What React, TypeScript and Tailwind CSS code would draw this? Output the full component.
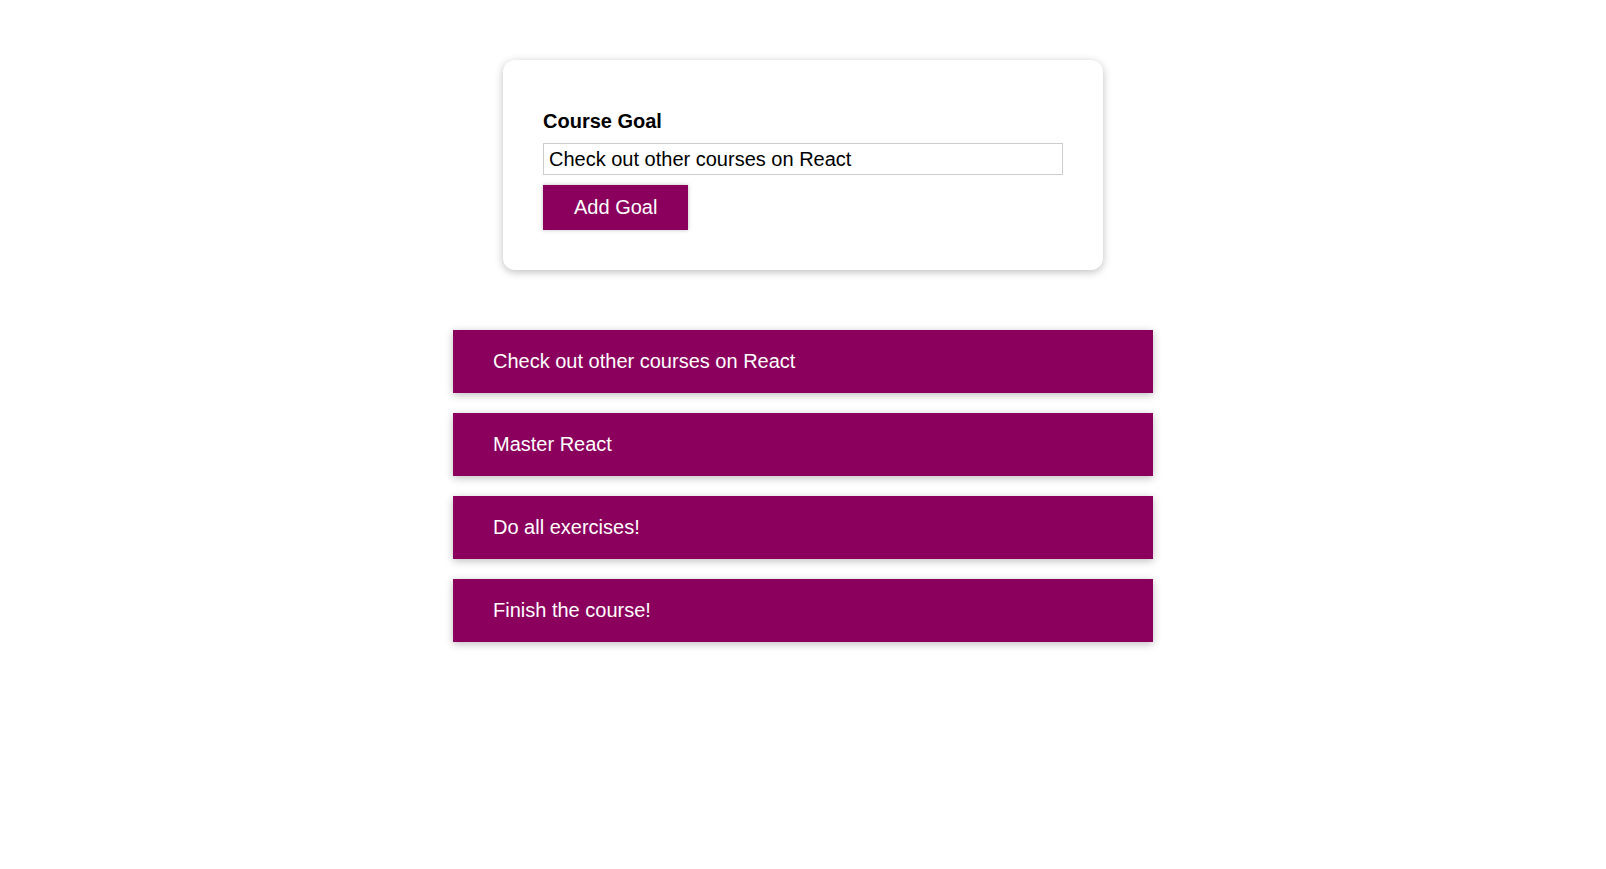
import { useState } from "react";

const initialGoals = [
  { id: "g1", text: "Check out other courses on React" },
  { id: "g2", text: "Master React" },
  { id: "g3", text: "Do all exercises!" },
  { id: "g4", text: "Finish the course!" },
];

export default function App() {
  const [goals, setGoals] = useState(initialGoals);
  const [value, setValue] = useState("Check out other courses on React");

  const addGoal = (e: React.FormEvent) => {
    e.preventDefault();
    if (!value.trim()) return;
    setGoals((prev) => [{ id: Math.random().toString(), text: value }, ...prev]);
  };

  return (
    <div className="min-h-screen bg-white pt-[60px] font-['Liberation_Sans',Arial,sans-serif] text-[20px] text-black">
      <section className="mx-auto w-[600px] rounded-[12px] bg-white p-[40px] shadow-[0_2px_8px_rgba(0,0,0,0.26)]">
        <form onSubmit={addGoal}>
          <div className="my-[10px]">
            <label className="mb-[10px] block font-bold leading-[23px]">Course Goal</label>
            <input
              type="text"
              value={value}
              onChange={(e) => setValue(e.target.value)}
              className="block w-full border border-[#ccc] px-[5px] leading-[30px] outline-none"
            />
          </div>
          <button
            type="submit"
            className="cursor-pointer border border-[#8b005d] bg-[#8b005d] px-[30px] py-[10px] leading-[23px] text-white shadow-[0_0_4px_rgba(0,0,0,0.26)]"
          >
            Add Goal
          </button>
        </form>
      </section>

      <section className="mx-auto mt-[60px] w-[700px]">
        <ul className="flex flex-col gap-[20px]">
          {goals.map((goal) => (
            <li
              key={goal.id}
              onClick={() => setGoals((prev) => prev.filter((g) => g.id !== goal.id))}
              className="cursor-pointer bg-[#8b005d] px-[40px] py-[20px] leading-[23px] text-white shadow-[0_2px_8px_rgba(0,0,0,0.26)]"
            >
              {goal.text}
            </li>
          ))}
        </ul>
      </section>
    </div>
  );
}
